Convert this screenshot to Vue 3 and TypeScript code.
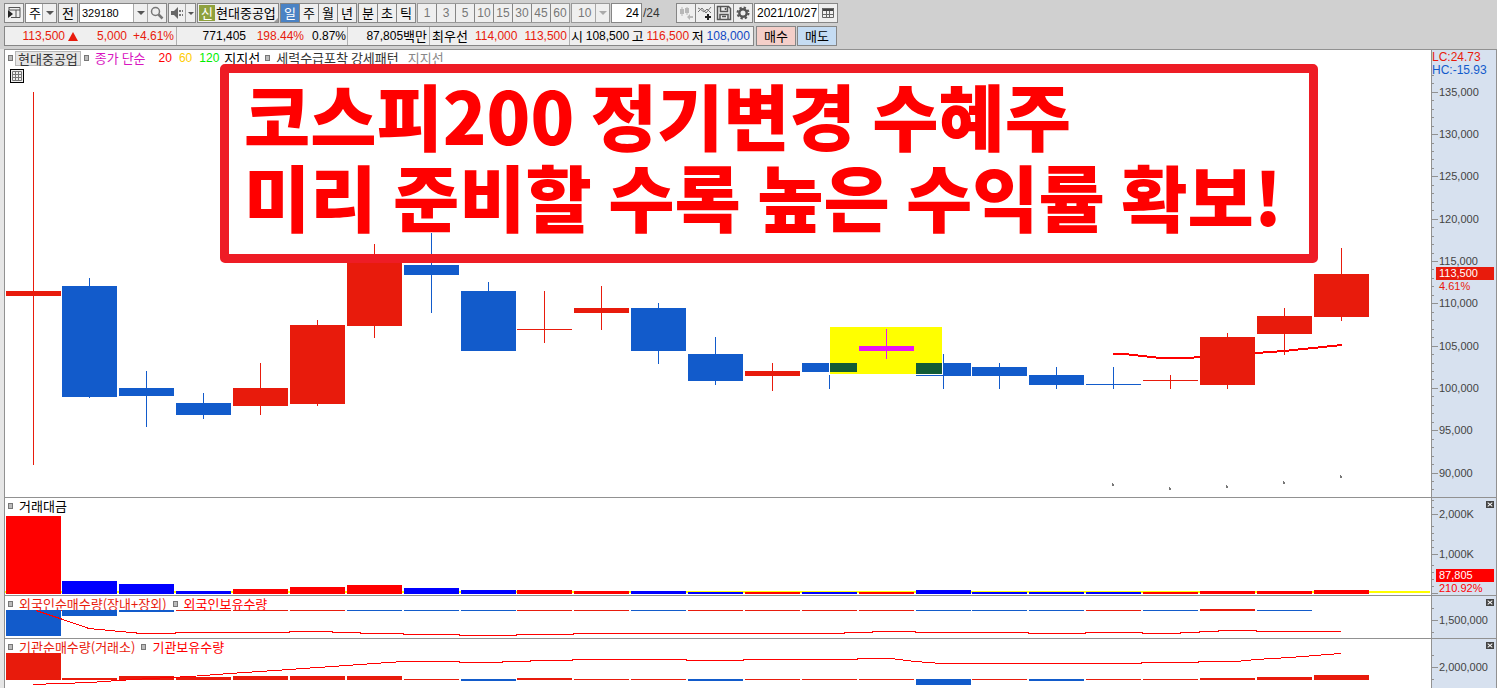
<script setup lang="ts">
type Tone = 'up' | 'down' | 'mark'

interface Candle {
  top: number
  bottom: number
  high: number
  low: number
  tone: Tone
}

interface Bar {
  x: number
  y: number
  h: number
  tone: Tone
}

interface Tick {
  y: number
  label?: string
}

const barX = (i: number): number => Math.floor(6.05 + 56.875 * i)

const candle = (top: number, bottom: number, high: number, low: number, tone: Tone): Candle => ({ top, bottom, high, low, tone })

const candles: Candle[] = [
  candle(291, 296, 92, 465, 'up'),
  candle(286, 397, 278, 398, 'down'),
  candle(388, 396, 371, 427, 'down'),
  candle(403, 415, 393, 419, 'down'),
  candle(388, 406, 363, 415, 'up'),
  candle(325, 404, 320, 406, 'up'),
  candle(262, 326, 244, 338, 'up'),
  candle(265, 275, 233, 313, 'down'),
  candle(291, 351, 282, 351, 'down'),
  candle(329, 330, 291, 343, 'up'),
  candle(308, 313, 286, 330, 'up'),
  candle(308, 351, 303, 364, 'down'),
  candle(354, 381, 337, 385, 'down'),
  candle(371, 376, 363, 391, 'up'),
  candle(363, 372, 363, 389, 'down'),
  candle(346, 351, 329, 359, 'mark'),
  candle(363, 376, 354, 389, 'down'),
  candle(367, 376, 363, 389, 'down'),
  candle(375, 385, 367, 389, 'down'),
  candle(384, 385, 367, 389, 'down'),
  candle(380, 381, 375, 389, 'up'),
  candle(337, 385, 333, 389, 'up'),
  candle(316, 334, 308, 355, 'up'),
  candle(274, 317, 248, 321, 'up'),
]

const toBars = (rows: [number, number][], tones: string): Bar[] =>
  rows.map(([y, end], i) => ({ x: barX(i), y, h: end - y, tone: tones[i] === 'r' ? 'up' : 'down' }))

const turnoverTops = [516, 581, 584, 591, 589, 587, 585, 588, 590, 590, 591, 591, 592, 592, 592, 592, 590, 592, 592, 592, 592, 591, 591, 590]
const turnover = toBars(turnoverTops.map((t): [number, number] => [t, 594]), 'rbbbrrrbbrrbbrbrbbbbrrrr')

const flat = (n: number, y: number): [number, number][] => Array.from({ length: n }, (): [number, number] => [y, y + 1])

const foreign = toBars(
  [[610, 636], [610, 616], [610, 612], ...flat(18, 610), [609, 611], [610, 611]],
  'bbbrrrbbbrrbrrrrbbbrbrb',
)

const institution = toBars(
  [
    [653, 680], [678, 680], [676, 680], [677, 680], [676, 680], [676, 680], [676, 680], [679, 680],
    [679, 681], [678, 680], [679, 680], [679, 680], [679, 681], [679, 680], [679, 680], [679, 680],
    [679, 685], [679, 680], [679, 681], [679, 680], [679, 680], [678, 680], [677, 680], [675, 680],
  ],
  'rrrrrrrrbrrrbrrrbrbrrrrr',
)

const average = '1113,354 1125,354 1160,358 1188,358 1200,357 1256,353 1284,351 1342,345'
const foreignLine =
  '36,610 60,618 89,628 120,631 142,633 175,633 176,632 289,632 290,631 332,631 333,632 360,632 361,633 403,633 404,634 459,634 460,635 516,635 517,634 573,634 574,633 844,633 845,632 872,632 873,631 915,631 916,632 1028,632 1029,633 1085,633 1086,632 1142,632 1143,633 1180,633 1181,632 1199,632 1200,631 1218,631 1219,630 1256,630 1257,631 1341,631'
const institutionLine =
  '33,684 60,683 90,682 118,680 150,678 190,676 230,673 260,671 289,669 332,666 374,663 404,661 459,661 460,662 502,662 503,661 530,661 531,660 572,660 573,659 686,659 687,660 743,660 744,659 857,659 858,658 891,658 915,661 942,663 1141,663 1142,662 1198,662 1199,661 1236,661 1256,659 1290,657 1315,655 1341,653'

const dots: [number, number][] = [[1112, 483], [1169, 487], [1226, 485], [1283, 481], [1340, 475]]

const priceTicks: Tick[] = []
for (let k = -2; k <= 47; k++) {
  const y = Math.floor(92.3 + k * 8.46)
  priceTicks.push(k >= 0 && k % 5 === 0 ? { y, label: `${135 - k},000` } : { y })
}

const turnoverTicks: Tick[] = [
  { y: 500 }, { y: 507 }, { y: 514, label: '2,000K' }, { y: 526 }, { y: 533 }, { y: 540 }, { y: 547 },
  { y: 554, label: '1,000K' }, { y: 565 }, { y: 572 }, { y: 579 }, { y: 586 }, { y: 593, label: '' },
]
const foreignTicks: Tick[] = [{ y: 608 }, { y: 620, label: '1,500,000' }, { y: 632 }]
const institutionTicks: Tick[] = [{ y: 655 }, { y: 667, label: '2,000,000' }, { y: 679 }]

const periods = ['일', '주', '월', '년']
const intraday = ['분', '초', '틱']
const minutes = [1, 3, 5, 10, 15, 30, 45, 60]
</script>

<template>
  <main class="app">
    <header class="head">
      <div class="bar">
        <button class="box sq" aria-label="패널">
          <svg width="16" height="16" viewBox="0 0 16 16"><path d="M3 2.500h11v10H5M3 2v3M3 5h11M10 5v8" fill="none" stroke="#555" /><path d="M2 5l5 4-5 4z" fill="#222" /></svg>
        </button>
        <div class="box combo c-week">
          <select aria-label="주기"><option>주</option></select>
          <span class="arrow"></span>
        </div>
        <button class="box sq">전</button>
        <div class="box combo c-code">
          <input value="329180" aria-label="종목코드" />
          <span class="arrow"></span>
          <button class="inner" aria-label="검색">
            <svg width="16" height="16" viewBox="0 0 16 16"><circle cx="6.500" cy="6.500" r="4" fill="#eee" stroke="#777" stroke-width="1.500" /><path d="M9.500 9.500l4 4" stroke="#777" stroke-width="2.500" /></svg>
          </button>
        </div>
        <div class="box combo c-sound">
          <button class="inner first" aria-label="소리">
            <svg width="16" height="16" viewBox="0 0 16 16"><path d="M2 6h3l4-4v12l-4-4H2z" fill="#666" /><path d="M10 5h2v2h-2zM13 5h1v2h-1zM10 9h2v2h-2zM13 9h1v2h-1z" fill="#777" /></svg>
          </button>
          <span class="arrow slim"></span>
        </div>
        <div class="box combo c-name"><b class="new">신</b><span class="stock">현대중공업</span><i class="corner"></i></div>
        <div class="group">
          <button v-for="(p, i) in periods" :key="p" :class="{ on: i === 0 }">{{ p }}</button>
        </div>
        <div class="group">
          <button v-for="p in intraday" :key="p">{{ p }}</button>
        </div>
        <div class="group off">
          <button v-for="m in minutes" :key="m" disabled>{{ m }}</button>
        </div>
        <div class="box combo off c-ten">
          <select aria-label="분 단위" disabled><option>10</option></select>
          <span class="arrow"></span>
        </div>
        <div class="box combo c-count"><input value="24" aria-label="봉 개수" /></div>
        <span class="total">/24</span>
        <div class="group tools">
          <button aria-label="캔들 추가" disabled>
            <svg width="16" height="16" viewBox="0 0 16 16"><path d="M4 2v9M9 2v8" stroke="#b8b8b8" /><path d="M2 4h4v5H2zM7 3h4v5H7zM9 12l3-3v2h3v2h-3v2z" fill="#b8b8b8" /></svg>
          </button>
          <button aria-label="지표 추가">
            <svg width="16" height="16" viewBox="0 0 16 16"><path d="M1 7l4-4 4 5 5-6M1 3l2 1 4 3 3-3 4 4" fill="none" stroke="#777" /><path d="M8 12h6M11 9v6" stroke="#222" stroke-width="2" /></svg>
          </button>
          <button aria-label="저장">
            <svg width="16" height="16" viewBox="0 0 16 16"><path d="M1.500 1.500h11l2 2v11h-13zM4.500 1.500v5h7v-5M4 14V9.500h8V14M9.500 3v2M6 11.500h4" fill="none" stroke="#555" stroke-width="1.500" /></svg>
          </button>
          <button aria-label="설정">
            <svg width="16" height="16" viewBox="0 0 16 16"><circle cx="8" cy="8" r="3.700" fill="none" stroke="#555" stroke-width="2.400" /><circle cx="8" cy="8" r="5.500" fill="none" stroke="#555" stroke-width="2" stroke-dasharray="2.300 2.020" /></svg>
          </button>
        </div>
        <div class="box combo c-date">
          <input value="2021/10/27" aria-label="날짜" />
          <button class="inner" aria-label="달력">
            <svg width="16" height="16" viewBox="0 0 16 16"><path d="M2 3h12v3H2z" fill="#444" /><path d="M2.500 3.500h11v9h-11zM6.500 6v6M9.500 6v6M2 9.500h12" fill="none" stroke="#666" /></svg>
          </button>
        </div>
      </div>

      <div class="bar">
        <div class="quote">
          <div class="cell s1">
            <span class="num red w-price">113,500</span><span class="tri"></span>
            <span class="num red w-diff">5,000</span><span class="num red w-rate">+4.61%</span>
          </div>
          <div class="cell s2">
            <span class="num w-vol">771,405</span><span class="num red w-ratio">198.44%</span><span class="num w-turn">0.87%</span>
          </div>
          <div class="cell s3"><span class="num">87,805</span><span>백만</span></div>
          <div class="cell s4"><span>최우선</span><span class="num red">114,000</span><span class="num red">113,500</span></div>
          <div class="cell s5">
            <span>시</span><span class="num">108,500</span><span>고</span><span class="num red">116,500</span><span>저</span><span class="num blue">108,000</span>
          </div>
        </div>
        <button class="trade buy">매수</button>
        <button class="trade sell">매도</button>
      </div>
    </header>

    <section class="chart">
      <div class="pane price">
        <div class="plot">
          <div class="legend">
            <i class="sq-mark"></i><span class="chip">현대중공업</span>
            <i class="sq-mark"></i><span class="magenta l-ma">종가 단순</span>
            <span class="num pure l-20">20</span><span class="num gold l-60">60</span><span class="num green l-120">120</span><span class="l-sup">지지선</span>
            <i class="sq-mark"></i><span class="dim l-pattern">세력수급포착 강세패턴</span><span class="grey">지지선</span>
          </div>
          <button class="grid-btn" aria-label="표 보기">
            <svg width="12" height="12" viewBox="0 0 12 12"><path d="M1.500 1.500h9v9h-9zM1 4.500h10M1 7.500h10M4.500 1v10M7.500 1v10" fill="none" stroke="#777" /></svg>
          </button>
          <svg class="draw" viewBox="5 50 1426 447" preserveAspectRatio="none" shape-rendering="crispEdges">
            <polyline :points="average" class="line thick" />
            <g v-for="(c, i) in candles" :key="i" :class="c.tone">
              <template v-if="c.tone !== 'mark'">
                <rect :x="barX(i) + 27" :y="c.high" width="1" :height="c.low - c.high" />
                <rect :x="barX(i)" :y="c.top" width="55" :height="c.bottom - c.top" />
              </template>
            </g>
            <rect x="829" y="327" width="114" height="48" fill="#fff" />
            <rect x="830" y="327" width="112" height="47" fill="#ff0" />
            <rect x="830" y="363" width="27" height="9" fill="#125c36" />
            <rect x="916" y="363" width="26" height="11" fill="#125c36" />
            <g class="mark">
              <rect x="886" y="329" width="1" height="30" />
              <rect x="859" y="346" width="55" height="5" />
            </g>
            <path v-for="d in dots" :key="d[0]" :d="`M${d[0]} ${d[1]}h1v1h1v2h-2z`" fill="#777" />
          </svg>
          <div class="banner">
            <p>코스피200 정기변경 수혜주</p>
            <p>미리 준비할 수록 높은 수익률 확보!</p>
          </div>
        </div>
        <svg class="axis" width="64" height="447" viewBox="1432 50 64 447">
          <g v-for="t in priceTicks" :key="t.y">
            <rect x="1432" :y="t.y" :width="t.label ? 6 : 2" height="1" fill="#919191" />
            <text v-if="t.label" x="1439" :y="t.y + 4">{{ t.label }}</text>
          </g>
          <text x="1432" y="61" class="t-up t-big">LC:24.73</text>
          <text x="1432" y="74" class="t-down t-big">HC:-15.93</text>
          <rect x="1436" y="267" width="58" height="13" fill="#e81b0c" />
          <text x="1439" y="277" class="t-white">113,500</text>
          <text x="1439" y="290" class="t-up">4.61%</text>
        </svg>
      </div>

      <div class="pane turnover">
        <div class="plot">
          <div class="legend"><i class="sq-mark"></i><span class="l-title">거래대금</span></div>
          <svg class="draw pure-tones" viewBox="5 498 1426 97" preserveAspectRatio="none" shape-rendering="crispEdges">
            <rect x="5" y="591" width="1425" height="2" fill="#ff0" />
            <rect v-for="b in turnover" :key="b.x" :x="b.x" :y="b.y" width="55" :height="b.h" :class="b.tone" />
          </svg>
        </div>
        <svg class="axis" width="64" height="97" viewBox="1432 498 64 97">
          <g v-for="t in turnoverTicks" :key="t.y">
            <rect x="1432" :y="t.y" :width="t.label !== undefined ? 6 : 2" height="1" fill="#919191" />
            <text v-if="t.label" x="1439" :y="t.y + 4">{{ t.label }}</text>
          </g>
          <rect x="1436" y="569" width="58" height="13" fill="#f00" />
          <text x="1439" y="579" class="t-white">87,805</text>
          <text x="1439" y="592" class="t-pure">210.92%</text>
        </svg>
        <button class="close" aria-label="닫기"></button>
      </div>

      <div class="pane foreign">
        <div class="plot">
          <div class="legend">
            <i class="sq-mark"></i><span class="red l-title">외국인순매수량(장내+장외)</span>
            <i class="sq-mark"></i><span class="pure l-title">외국인보유수량</span>
          </div>
          <svg class="draw" viewBox="5 596 1426 42" preserveAspectRatio="none" shape-rendering="crispEdges">
            <rect v-for="b in foreign" :key="b.x" :x="b.x" :y="b.y" width="55" :height="b.h" :class="b.tone" />
            <polyline :points="foreignLine" class="line" transform="translate(0 .5)" />
          </svg>
        </div>
        <svg class="axis" width="64" height="42" viewBox="1432 596 64 42">
          <g v-for="t in foreignTicks" :key="t.y">
            <rect x="1432" :y="t.y" :width="t.label ? 6 : 2" height="1" fill="#919191" />
            <text v-if="t.label" x="1439" :y="t.y + 4">{{ t.label }}</text>
          </g>
        </svg>
        <button class="close" aria-label="닫기"></button>
      </div>

      <div class="pane institution">
        <div class="plot">
          <div class="legend">
            <i class="sq-mark"></i><span class="red l-title">기관순매수량(거래소)</span>
            <i class="sq-mark"></i><span class="pure l-title">기관보유수량</span>
          </div>
          <svg class="draw" viewBox="5 639 1426 49" preserveAspectRatio="none" shape-rendering="crispEdges">
            <rect v-for="b in institution" :key="b.x" :x="b.x" :y="b.y" width="55" :height="b.h" :class="b.tone" />
            <polyline :points="institutionLine" class="line" transform="translate(0 .5)" />
          </svg>
        </div>
        <svg class="axis" width="64" height="49" viewBox="1432 639 64 49">
          <g v-for="t in institutionTicks" :key="t.y">
            <rect x="1432" :y="t.y" :width="t.label ? 6 : 2" height="1" fill="#919191" />
            <text v-if="t.label" x="1439" :y="t.y + 4">{{ t.label }}</text>
          </g>
        </svg>
        <button class="close" aria-label="닫기"></button>
      </div>
    </section>
  </main>
</template>

<style>
body {
  margin: 0;
  background: #e6e6e6;
}
</style>

<style scoped>
.app,
.app button,
.app input,
.app select {
  font-family: 'Noto Sans CJK KR', sans-serif;
  font-size: 13px;
  line-height: 18px;
  color: #000;
}
.app * {
  box-sizing: border-box;
}
.app {
  min-height: 100vh;
  overflow: hidden;
  white-space: nowrap;
}
button,
input,
select {
  margin: 0;
  padding: 0;
  border: 0;
  border-radius: 0;
  background: none;
  appearance: none;
  min-width: 0;
}
.head {
  display: flex;
  flex-direction: column;
  gap: 3px;
  padding: 3px 0 3px 4px;
  background: #d0d0d0;
}
.bar {
  display: flex;
  gap: 1px;
  height: 20px;
}
.box,
.group {
  display: flex;
  flex: none;
  height: 20px;
  border: 1px solid #868686;
  background: #efefef;
}
.sq {
  width: 20px;
  align-items: center;
  justify-content: center;
}
.app button.box {
  border: 1px solid #868686;
  background: #efefef;
}
.combo {
  background: #fff;
}
.combo input,
.combo select {
  flex: 1;
  width: 0;
  padding-left: 3px;
  height: 18px;
}
.app .combo input {
  padding-left: 2px;
}
.app .num,
.app .total,
.app .combo input,
.app .off button,
.app .off select {
  font-family: 'Liberation Sans', 'Noto Sans CJK KR', sans-serif;
  font-size: 12px;
}
.app .combo input {
  font-size: 11px;
}
.arrow {
  display: flex;
  flex: none;
  align-items: center;
  justify-content: center;
  width: 14px;
  border-left: 1px solid #a8a8a8;
  background: #efefef;
}
.arrow.slim {
  width: 10px;
}
.arrow::after {
  content: '';
  border: 4px solid transparent;
  border-top: 4px solid #555;
  border-bottom: 0;
}
.arrow.slim::after {
  border-width: 3px 3px 0;
}
.inner {
  display: flex;
  flex: none;
  align-items: center;
  justify-content: center;
  width: 19px;
}
.app .inner {
  border-left: 1px solid #a8a8a8;
  background: #efefef;
}
.app .inner.first {
  border-left: 0;
  width: 16px;
}
.c-week {
  width: 32px;
}
.c-code {
  width: 88px;
}
.c-sound {
  width: 28px;
}
.c-name {
  position: relative;
  width: 82px;
  padding: 1px;
  background: #efefef;
}
.new {
  width: 16px;
  background: #8fa13e;
  color: #fff;
  font-weight: 400;
  line-height: 16px;
  text-align: center;
}
.stock {
  padding-left: 1px;
  line-height: 16px;
}
.corner {
  position: absolute;
  right: 0;
  bottom: 0;
  border: 2px solid #999;
  border-top-color: transparent;
  border-left-color: transparent;
}
.group button {
  display: flex;
  align-items: center;
  justify-content: center;
  width: 19px;
}
.group button:first-child {
  width: 18px;
}
.app .group button + button {
  border-left: 1px solid #868686;
}
.app .group .on {
  background: #4a82c4;
  color: #fff;
}
.app .off {
  border-color: #999;
}
.app .off button,
.app .off select {
  color: #777;
  opacity: 1;
}
.off.combo {
  background: #efefef;
}
.off .arrow::after {
  border-top-color: #aaa;
}
.c-ten {
  width: 39px;
}
.app .c-ten select {
  padding-left: 6px;
}
.c-count {
  width: 31px;
}
.app .c-count input {
  padding: 0 2px 0 0;
  font-size: 12px;
  text-align: right;
}
.total {
  width: 32px;
  line-height: 20px;
  color: #333;
}
.c-date {
  width: 84px;
}
.app .c-date input {
  font-size: 12px;
}
.quote {
  display: flex;
  width: 750px;
  border: 1px solid #868686;
  background: #efefef;
}
.cell {
  display: flex;
  align-items: center;
  flex: none;
}
.cell + .cell {
  border-left: 1px solid #b0b0b0;
}
.num {
  text-align: right;
}
.s1 {
  width: 171px;
}
.w-price {
  width: 60px;
}
.tri {
  margin-left: 3px;
  border: 5px solid transparent;
  border-top: 0;
  border-bottom: 9px solid #e81b0c;
}
.w-diff {
  width: 49px;
}
.w-rate {
  width: 47px;
}
.s2 {
  width: 171px;
}
.w-vol {
  width: 69px;
}
.w-ratio {
  width: 58px;
}
.w-turn {
  width: 42px;
}
.s3 {
  width: 82px;
  justify-content: flex-end;
  padding-right: 2px;
}
.s4 {
  width: 140px;
  justify-content: space-between;
  padding: 0 2px;
}
.s5 {
  flex: 1;
  justify-content: space-between;
  padding: 0 3px 0 1px;
}
.app .trade {
  width: 40px;
  border: 1px solid #868686;
}
.app .buy {
  margin-left: 1px;
  background: #f4cfc9;
}
.app .sell {
  background: #c5dcf3;
}
.red {
  color: #e81b0c;
}
.pure {
  color: #f00;
}
.blue {
  color: #1148c4;
}
.magenta {
  color: #d815c0;
}
.gold {
  color: #fc0;
}
.green {
  color: #0e0;
}
.grey {
  color: #888;
}
.dim {
  color: #333;
}
.chart {
  margin-left: 4px;
  border-left: 1px solid #919191;
  border-right: 1px solid #919191;
}
.pane {
  position: relative;
  display: flex;
  border-top: 1px solid #919191;
  background: #fff;
}
.plot {
  position: relative;
  display: grid;
  flex: 1;
  min-width: 0;
  border-right: 1px solid #919191;
}
.draw {
  grid-area: 1 / 1;
  display: block;
  width: 100%;
  pointer-events: none;
}
.price .draw {
  height: 447px;
}
.turnover .draw {
  height: 97px;
}
.foreign .draw {
  height: 42px;
}
.institution .draw {
  height: 49px;
}
.legend {
  grid-area: 1 / 1;
  display: flex;
  align-items: center;
  align-self: start;
  height: 16px;
  padding-left: 3px;
}
.sq-mark {
  width: 5px;
  height: 6px;
  border: 1px solid #777;
  background: #bbb;
}
.chip {
  margin: 0 3px 0 2px;
  padding: 0 2px;
  border: 1px solid #b8b8b8;
  background: #e6e6e6;
  color: #333;
  line-height: 13px;
}
.l-title {
  margin: 0 6px;
}
.l-ma {
  margin: 0 13px 0 6px;
}
.l-20,
.l-60 {
  margin-right: 7px;
}
.l-120 {
  margin-right: 5px;
}
.l-sup {
  margin-right: 5px;
}
.l-pattern {
  margin: 0 9px 0 6px;
}
.app .grid-btn {
  grid-area: 1 / 1;
  display: flex;
  width: 14px;
  height: 14px;
  margin: 19px 0 0 5px;
  border: 1px solid #000;
  background: #eee;
}
.axis {
  flex: none;
  display: block;
  background: #d7e1ef;
}
.axis text {
  font-family: 'Liberation Sans', sans-serif;
  font-size: 11px;
  fill: #444;
}
.axis .t-big {
  font-size: 12px;
}
.axis .t-up {
  fill: #e81b0c;
}
.axis .t-pure {
  fill: #f00;
}
.axis .t-down {
  fill: #125bcb;
}
.axis .t-white {
  fill: #fff;
}
.up {
  fill: #e81b0c;
}
.down {
  fill: #125bcb;
}
.mark {
  fill: #e815f5;
}
.pure-tones .up {
  fill: #f00;
}
.pure-tones .down {
  fill: #00f;
}
.line {
  fill: none;
  stroke: #f00;
  stroke-width: 1;
}
.thick {
  stroke-width: 2;
}
.app .close {
  position: absolute;
  top: 3px;
  right: 2px;
  width: 8px;
  height: 7px;
  background: #444;
}
.close::before,
.close::after {
  content: '';
  position: absolute;
  top: 3px;
  left: 1px;
  width: 6px;
  height: 1px;
  background: #fff;
  transform: rotate(40deg);
}
.close::after {
  transform: rotate(-40deg);
}
.banner {
  position: absolute;
  top: 14px;
  left: 215px;
  width: 77%;
  padding: 0 0 19px 15px;
  border: 9px solid #ee1c25;
  border-radius: 5px;
}
.banner p {
  margin: 0;
  font-size: 72px;
  font-weight: 900;
  line-height: 81px;
  color: #f00;
}
</style>
